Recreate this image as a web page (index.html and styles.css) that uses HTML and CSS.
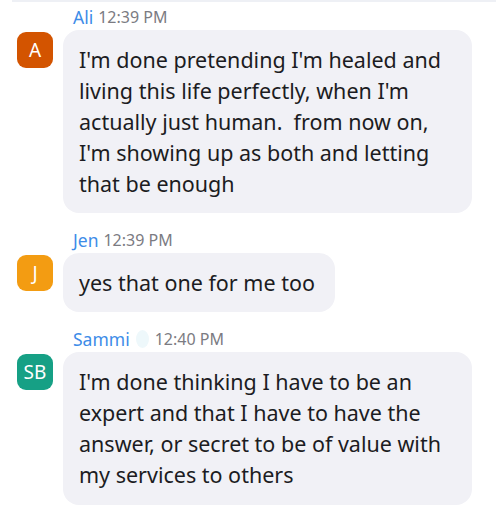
FILE: index.html
```html
<!DOCTYPE html>
<html lang="en">
<head>
    <meta charset="UTF-8">
    <meta name="viewport" content="width=device-width, initial-scale=1.0">
    <title>Chat</title>
    <link rel="stylesheet" href="styles.css">
</head>
<body>

<div class="chat">
    <!-- Ali -->
    <div class="message">
        <div class="meta"><span class="name">Ali</span> <span class="time">12:39 PM</span></div>
        <div class="row">
            <div class="avatar avatar-a">A</div>
            <div class="bubble">I'm done pretending I'm healed and living this life perfectly, when I'm actually just human.&nbsp; from now on, I'm showing up as both and letting that be enough</div>
        </div>
    </div>

    <!-- Jen -->
    <div class="message">
        <div class="meta"><span class="name">Jen</span> <span class="time">12:39 PM</span></div>
        <div class="row">
            <div class="avatar avatar-j">J</div>
            <div class="bubble">yes that one for me too</div>
        </div>
    </div>

    <!-- Sammi -->
    <div class="message">
        <div class="meta"><span class="name">Sammi</span><span class="blob"></span><span class="time">12:40 PM</span></div>
        <div class="row">
            <div class="avatar avatar-sb">SB</div>
            <div class="bubble">I'm done thinking I have to be an expert and that I have to have the answer, or secret to be of value with my services to others</div>
        </div>
    </div>
</div>

</body>
</html>
```

FILE: styles.css
```css
body {
    font-family: "Noto Sans", "Open Sans", sans-serif;
    background-color: #fff;
    margin: 0;
    padding: 0;
}
.chat {
    border-top: 2px solid #eef0f5;
    margin-left: 12px;
    padding-top: 4px;
    width: 484px;
}
.message {
    margin-bottom: 16px;
}
.message:last-child {
    margin-top: 1px;
}
.meta {
    padding-left: 61px;
    font-size: 17.5px;
    line-height: 22px;
    display: flex;
    align-items: center;
}
.name {
    color: #3d8ce8;
}
.time {
    color: #7b7b82;
    font-size: 16px;
    margin-left: 5px;
}
.blob {
    display: inline-block;
    width: 13px;
    height: 18px;
    border-radius: 50%;
    background-color: #eef8fb;
    margin-left: 6px;
    margin-right: 1px;
}
.row {
    display: flex;
    align-items: flex-start;
    margin-top: 2px;
}
.avatar {
    width: 36px;
    height: 36px;
    border-radius: 9px;
    color: #fff;
    font-size: 19px;
    display: flex;
    justify-content: center;
    align-items: center;
    margin-left: 5px;
    margin-top: 2px;
    flex-shrink: 0;
}
.avatar-a {
    background-color: #d35400;
}
.avatar-j {
    background-color: #f39c12;
}
.avatar-sb {
    background-color: #16a085;
}
.bubble {
    margin-left: 10px;
    background-color: #f1f1f6;
    border-radius: 16px;
    padding: 14px 20px 14px 16px;
    font-size: 21.5px;
    line-height: 31px;
    color: #1c1c22;
    max-width: 373px;
}
.message:last-child .bubble {
    padding-bottom: 15px;
}
```
